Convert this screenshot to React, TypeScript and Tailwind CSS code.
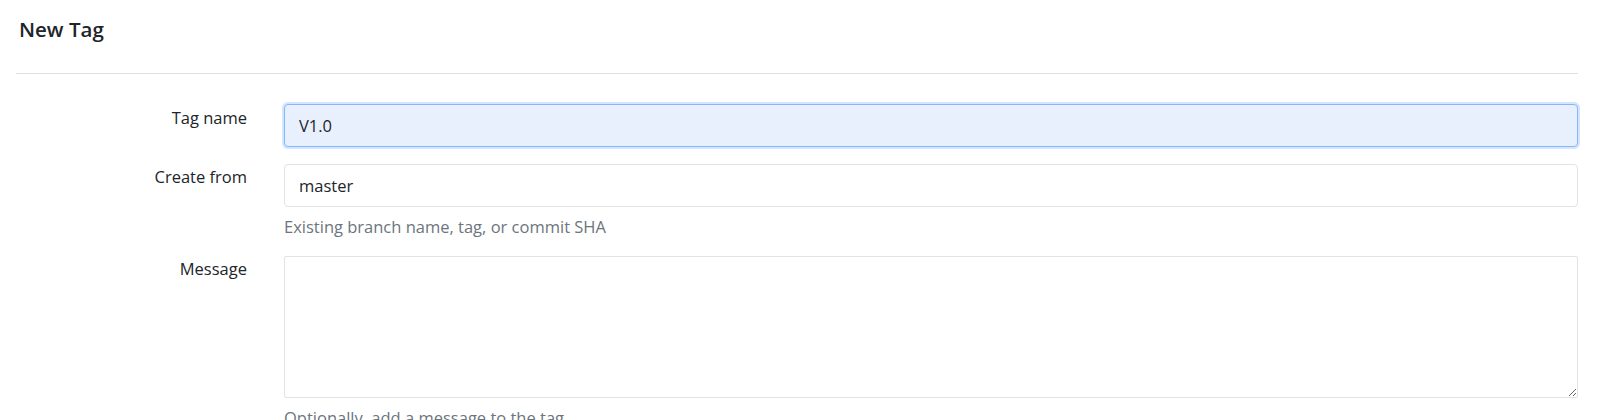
export default function App() {
  return (
    <div className="min-h-screen bg-white pl-[16px] pr-[19px] text-[#212529] font-['Open_Sans',sans-serif]">
      {/* header */}
      <div className="h-[74px] border-b border-[#dee2e6] pt-[17px] pl-[3px]">
        <h5 className="text-[20.5px] leading-[24px] font-semibold text-[#212529]">New Tag</h5>
      </div>

      <form className="pt-[30px]">
        <div className="flex mb-[17px]">
          <label className="w-[231px] shrink-0 text-right text-[16.5px] leading-[24px] pt-[2px]">Tag name</label>
          <div className="ml-[37px] flex-1">
            <input
              defaultValue="V1.0"
              className="w-full h-[43px] rounded-[4px] border border-[#86b7fe] bg-[#e8f0fe] px-[14px] text-[16.5px] text-[#212529] outline-none shadow-[0_0_0_2px_rgba(13,110,253,0.18)]"
            />
          </div>
        </div>

        <div className="flex mb-[17px]">
          <label className="w-[231px] shrink-0 text-right text-[16.5px] leading-[24px] pt-[1px]">Create from</label>
          <div className="ml-[37px] flex-1">
            <input
              defaultValue="master"
              className="w-full h-[43px] rounded-[4px] border border-[#e3e3e3] bg-white px-[14px] text-[16.5px] text-[#212529] outline-none"
            />
            <p className="mt-[8px] text-[16.5px] leading-[24px] text-[#6c757d]">Existing branch name, tag, or commit SHA</p>
          </div>
        </div>

        <div className="flex mb-[17px]">
          <label className="w-[231px] shrink-0 text-right text-[16.5px] leading-[24px] pt-[1px]">Message</label>
          <div className="ml-[37px] flex-1">
            <textarea className="block w-full h-[142px] rounded-[2px] border border-[#e3e3e3] bg-white px-[14px] py-[9px] text-[16.5px] outline-none" />
            <p className="mt-[8px] text-[16.5px] leading-[24px] text-[#6c757d]">Optionally, add a message to the tag</p>
          </div>
        </div>
      </form>
    </div>
  );
}
